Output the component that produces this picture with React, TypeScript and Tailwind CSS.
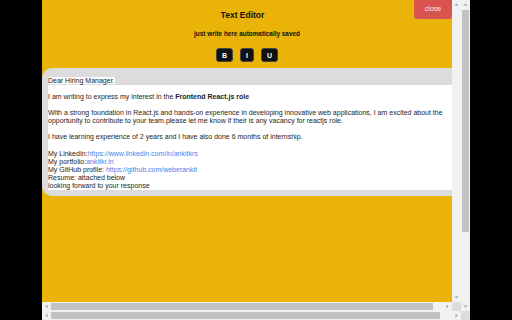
import React from "react";

type Dir = "up" | "down" | "left" | "right";

const arrowPoints: Record<Dir, string> = {
  up: "0.5,3.5 2.5,1.5 4.5,3.5",
  down: "0.5,1.5 2.5,3.5 4.5,1.5",
  left: "3.5,0.5 1.5,2.5 3.5,4.5",
  right: "1.5,0.5 3.5,2.5 1.5,4.5",
};

function Arrow({ dir }: { dir: Dir }) {
  return (
    <div className="w-[9px] h-[9px] shrink-0 flex items-center justify-center">
      <svg width="5" height="5" viewBox="0 0 5 5">
        <polygon points={arrowPoints[dir]} fill="#a0a0a0" />
      </svg>
    </div>
  );
}

function Line({ children }: { children?: React.ReactNode }) {
  return <div className="whitespace-nowrap">{children ?? <br />}</div>;
}

function Link({ children }: { children: React.ReactNode }) {
  return <span className="text-[#3f86ee]">{children}</span>;
}

function Page() {
  return (
    <div className="relative w-[410px] h-[302px] bg-[#eab308] overflow-hidden flex flex-col">
      <button className="absolute top-0 right-0 w-[38px] h-[19px] bg-[#d9534f] rounded-b-[3px] text-[7px] text-[#fdeaea] flex items-center justify-center">
        close
      </button>

      <h1 className="mt-[10px] h-[10px] leading-[10px] text-[8.5px] font-bold text-center text-[#111] pr-[9px]">
        Text Editor
      </h1>

      <p className="mt-[10px] h-[8px] leading-[8px] text-[6.4px] font-bold text-center text-[#111]">
        just write here automatically saved
      </p>

      <div className="mt-[10px] h-[14px] flex justify-center gap-[7px]">
        {["B", "I", "U"].map((l) => (
          <button
            key={l}
            className="h-[14px] px-[5px] bg-[#111] border border-[#444] rounded-[3px] text-white text-[7px] font-bold leading-none"
          >
            {l}
          </button>
        ))}
      </div>

      <div className="mt-[6px] bg-[#dcdcdc] rounded-l-[10px] pl-[6px] pt-[9px] pb-[6px] text-[7px] leading-[8.07px] text-[#1c1c1c]">
        <Line>
          <span className="bg-white">Dear Hiring Manager.</span>
        </Line>
        <div className="bg-white">
          <Line />
          <Line>
            I am writing to express my interest in the{" "}
            <b>Frontend React.js role</b>
          </Line>
          <Line />
          <Line>
            With a strong foundation in React.js and hands-on experience in
            developing innovative web applications, I am excited about the
          </Line>
          <Line>
            opportunity to contribute to your team.please let me know if their
            is any vacancy for reactjs role.
          </Line>
          <Line />
          <Line>
            I have learning experience of 2 years and I have also done 6 months
            of internship.
          </Line>
          <Line />
          <Line>
            My LinkedIn:<Link>https://www.linkedin.com/in/ankitkrs</Link>
          </Line>
          <Line>
            My portfolio:<Link>ankitkr.in</Link>
          </Line>
          <Line>
            My GitHub profile: <Link>https://github.com/weberankit</Link>
          </Line>
          <Line>Resume: attached below</Line>
          <Line>looking forward to your response</Line>
        </div>
      </div>
    </div>
  );
}

export default function App() {
  return (
    <div className="w-[512px] h-[320px] bg-black flex overflow-hidden font-['Liberation_Sans',Arial,sans-serif]">
      <div className="w-[42px] shrink-0" />
      <div className="w-[428px] shrink-0 flex flex-col">
        <div className="flex h-[311px]">
          <div className="w-[419px] flex flex-col">
            <div className="flex h-[302px]">
              <Page />
              <div className="w-[9px] bg-[#f1f1f1] flex flex-col">
                <Arrow dir="up" />
                <div className="flex-1" />
                <Arrow dir="down" />
              </div>
            </div>
            <div className="flex h-[9px]">
              <div className="w-[410px] bg-[#f1f1f1] flex items-center">
                <Arrow dir="left" />
                <div className="w-[382px] h-[7px] bg-[#c2c2c2]" />
                <div className="flex-1" />
                <Arrow dir="right" />
              </div>
              <div className="w-[9px] bg-[#dcdcdc]" />
            </div>
          </div>
          <div className="w-[9px] bg-[#f1f1f1] flex flex-col items-center">
            <Arrow dir="up" />
            <div className="mt-[1px] w-[7px] h-[222px] bg-[#c2c2c2]" />
            <div className="flex-1" />
            <Arrow dir="down" />
          </div>
        </div>
        <div className="flex h-[9px]">
          <div className="w-[419px] bg-[#f1f1f1] flex items-center">
            <Arrow dir="left" />
            <div className="w-[389px] h-[7px] bg-[#c2c2c2]" />
            <div className="flex-1" />
            <Arrow dir="right" />
          </div>
          <div className="w-[9px] bg-[#dcdcdc]" />
        </div>
      </div>
    </div>
  );
}
